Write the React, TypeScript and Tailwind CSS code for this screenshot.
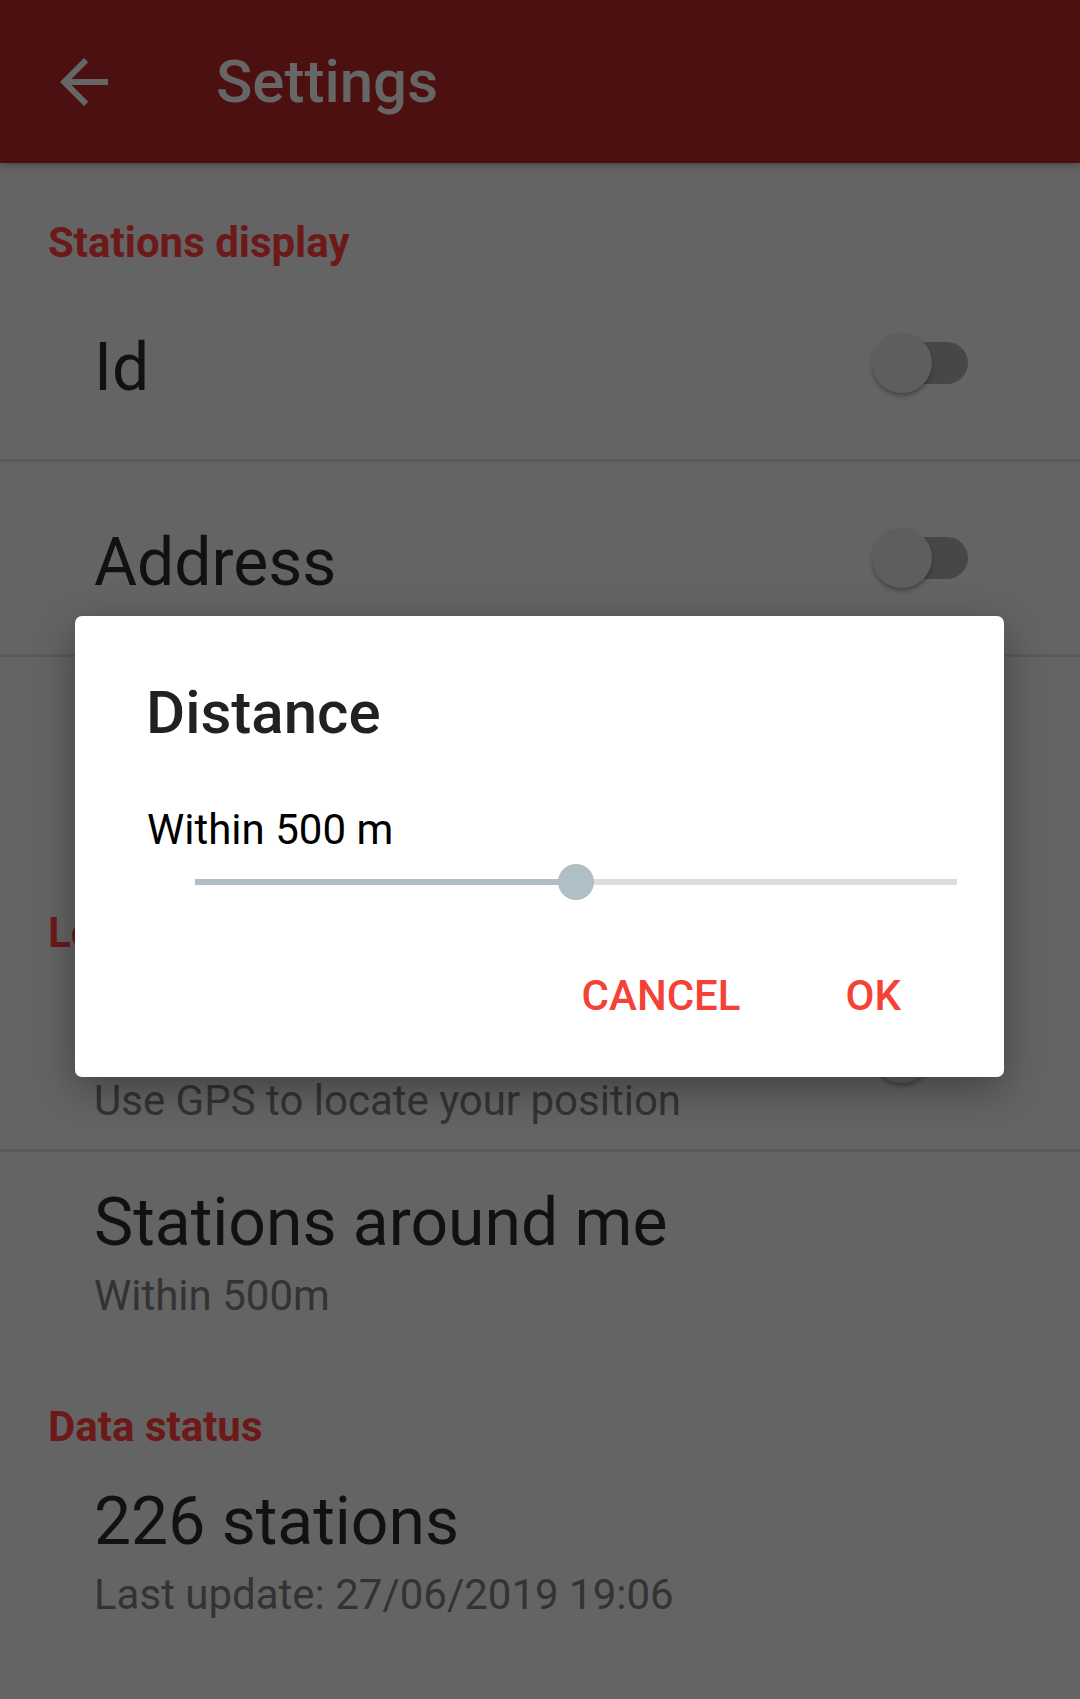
import React from 'react';

const Toggle = () => (
  <div className="relative w-[102px] h-[60px] mr-[112px] self-center shrink-0">
    <div className="absolute left-[16px] right-0 top-[9px] h-[42px] rounded-full bg-[#474747]" />
    <div className="absolute left-[6px] top-0 w-[60px] h-[60px] rounded-full bg-[#5e5e5e] shadow-[0_3px_4px_rgba(0,0,0,0.3)]" />
  </div>
);

const Header = ({ text }: { text: string }) => (
  <div className="h-[104px] pl-[48px] pt-[59px]">
    <span className="text-[42px] leading-none font-bold text-[#6e1919]">{text}</span>
  </div>
);

const SwitchRow = ({ title, divider }: { title: string; divider?: boolean }) => (
  <div className={`h-[195px] flex ${divider ? 'border-b-[3px] border-[#5a5a5a]' : ''}`}>
    <div className="flex-1 pl-[94px] pt-[68px] text-[66px] leading-none text-[#111111]">{title}</div>
    <Toggle />
  </div>
);

const TwoLineRow = ({
  title,
  subtitle,
  toggle,
  divider,
}: {
  title: string;
  subtitle: string;
  toggle?: boolean;
  divider?: boolean;
}) => (
  <div className={`h-[195px] flex ${divider ? 'border-b-[3px] border-[#5a5a5a]' : ''}`}>
    <div className="flex-1 pl-[94px] pt-[38px]">
      <div className="text-[66px] leading-none text-[#111111]">{title}</div>
      <div className="mt-[19px] text-[42px] leading-none text-[#333333]">{subtitle}</div>
    </div>
    {toggle && <Toggle />}
  </div>
);

export default function App() {
  return (
    <div className="relative w-[1080px] h-[1699px] overflow-hidden bg-[#646464] font-['Roboto']">
      {/* App bar */}
      <div className="relative z-10 h-[163px] bg-[#4d1010] flex items-center pl-[48px] shadow-[0_2px_6px_rgba(0,0,0,0.3)]">
        <svg width="72" height="72" viewBox="0 0 24 24" fill="#666666">
          <path d="M20 11H7.83l5.59-5.59L12 4l-8 8 8 8 1.41-1.41L7.83 13H20v-2z" />
        </svg>
        <span className="ml-[96px] text-[60px] leading-none font-medium text-[#666666]">Settings</span>
      </div>

      {/* Preferences list */}
      <Header text="Stations display" />
      <SwitchRow title="Id" divider />
      <SwitchRow title="Address" divider />
      <div className="h-[196px]" />

      <Header text="Location" />
      <TwoLineRow title="GPS" subtitle="Use GPS to locate your position" toggle divider />
      <TwoLineRow title="Stations around me" subtitle="Within 500m" />

      <Header text="Data status" />
      <TwoLineRow title="226 stations" subtitle="Last update: 27/06/2019 19:06" />

      {/* Distance dialog */}
      <div className="absolute left-[75px] top-[616px] w-[929px] h-[461px] bg-white rounded-[7px] shadow-[0_12px_40px_rgba(0,0,0,0.35)] flex flex-col">
        <div className="pl-[71px] pt-[67px] text-[60px] leading-none font-medium text-[#212121]">Distance</div>
        <div className="pl-[72px] mt-[66px] text-[42px] leading-none text-[#000000]">Within 500 m</div>
        <div className="relative ml-[120px] w-[762px] h-[36px] mt-[13px]">
          <div className="absolute left-0 right-0 top-[15px] h-[6px] bg-[#dcdcdc]" />
          <div className="absolute left-0 w-1/2 top-[15px] h-[6px] bg-[#b0bec5]" />
          <div className="absolute left-[363px] top-0 w-[36px] h-[36px] rounded-full bg-[#b0bec5]" />
        </div>
        <div className="mt-[75px] flex justify-end gap-[105px] pr-[103px] text-[42px] leading-none font-medium text-[#f44336]">
          <span>CANCEL</span>
          <span>OK</span>
        </div>
      </div>
    </div>
  );
}
